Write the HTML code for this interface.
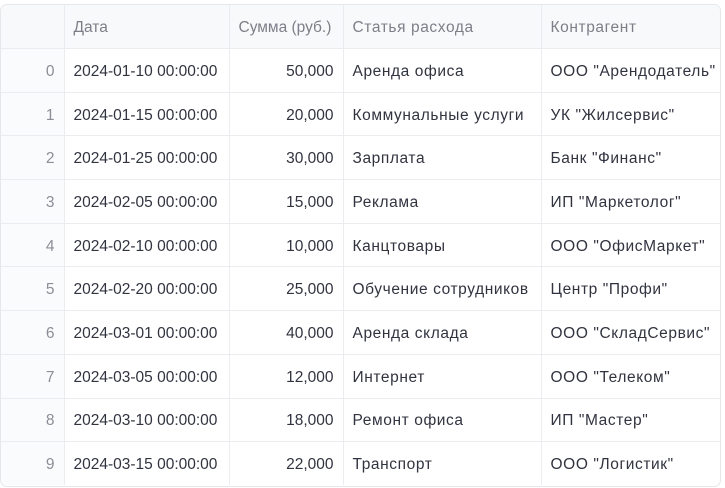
<!DOCTYPE html>
<html><head><meta charset="utf-8"><style>
body{margin:0;background:#fff;width:725px;height:488px;overflow:hidden;font-family:"Liberation Sans","DejaVu Sans",sans-serif;}
.t{position:absolute;left:0;top:4px;width:719px;height:481px;border:1px solid #e6e7ea;border-radius:7px;overflow:hidden;}
table{border-collapse:collapse;table-layout:fixed;width:720px;font-size:15.5px;color:#31333f;}
td,th{border-right:1px solid #ebecef;border-bottom:1px solid #ebecef;padding:3px 9px 0 9px;height:39.7px;white-space:nowrap;overflow:hidden;font-weight:normal;}
th{height:40px;background:#f8f9fb;color:#7c7f88;text-align:left;}
td.i{color:#8b8e96;text-align:right;background:#fafbfc;}
td.n{text-align:right;}
td:nth-child(4),td:nth-child(5),th:nth-child(4),th:nth-child(5){letter-spacing:0.6px;}
tr:last-child td{border-bottom:none}
td:last-child,th:last-child{border-right:none}
</style></head><body><div class="t"><table>
<colgroup><col style="width:63px"><col style="width:165px"><col style="width:114px"><col style="width:198px"><col style="width:180px"></colgroup>
<tr><th style="background:#f8f9fb"></th><th>Дата</th><th>Сумма (руб.)</th><th>Статья расхода</th><th>Контрагент</th></tr>
<tr><td class="i">0</td><td>2024-01-10 00:00:00</td><td class="n">50,000</td><td>Аренда офиса</td><td>ООО "Арендодатель"</td></tr>
<tr><td class="i">1</td><td>2024-01-15 00:00:00</td><td class="n">20,000</td><td>Коммунальные услуги</td><td>УК "Жилсервис"</td></tr>
<tr><td class="i">2</td><td>2024-01-25 00:00:00</td><td class="n">30,000</td><td>Зарплата</td><td>Банк "Финанс"</td></tr>
<tr><td class="i">3</td><td>2024-02-05 00:00:00</td><td class="n">15,000</td><td>Реклама</td><td>ИП "Маркетолог"</td></tr>
<tr><td class="i">4</td><td>2024-02-10 00:00:00</td><td class="n">10,000</td><td>Канцтовары</td><td>ООО "ОфисМаркет"</td></tr>
<tr><td class="i">5</td><td>2024-02-20 00:00:00</td><td class="n">25,000</td><td>Обучение сотрудников</td><td>Центр "Профи"</td></tr>
<tr><td class="i">6</td><td>2024-03-01 00:00:00</td><td class="n">40,000</td><td>Аренда склада</td><td>ООО "СкладСервис"</td></tr>
<tr><td class="i">7</td><td>2024-03-05 00:00:00</td><td class="n">12,000</td><td>Интернет</td><td>ООО "Телеком"</td></tr>
<tr><td class="i">8</td><td>2024-03-10 00:00:00</td><td class="n">18,000</td><td>Ремонт офиса</td><td>ИП "Мастер"</td></tr>
<tr><td class="i">9</td><td>2024-03-15 00:00:00</td><td class="n">22,000</td><td>Транспорт</td><td>ООО "Логистик"</td></tr>
</table></div></body></html>
